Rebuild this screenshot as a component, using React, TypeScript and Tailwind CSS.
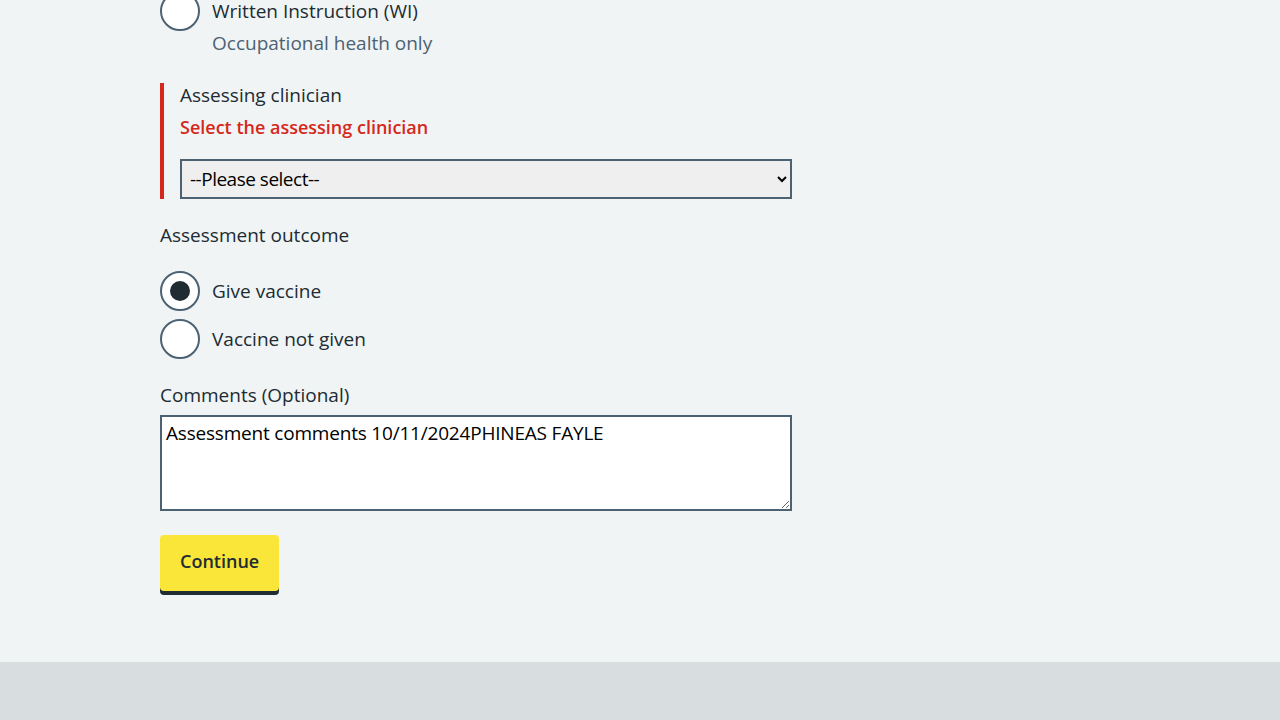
import { useState } from 'react'

const font = { fontFamily: '"Open Sans", "Noto Sans", sans-serif' }

function Radio({ label, checked, onChange }: { label: string; checked: boolean; onChange: () => void }) {
  return (
    <label className="flex items-center cursor-pointer" onClick={onChange}>
      <span className="flex h-10 w-10 shrink-0 items-center justify-center rounded-full border-2 border-[#4c6272] bg-white">
        {checked && <span className="h-5 w-5 rounded-full bg-[#212b32]" />}
      </span>
      <span className="ml-3 text-[19px] leading-7 text-[#212b32]">{label}</span>
    </label>
  )
}

export default function App() {
  const [outcome, setOutcome] = useState('give')
  const [type, setType] = useState('')

  return (
    <div className="min-h-screen bg-[#f0f4f5] flex flex-col" style={font}>
      <main className="px-[160px] pb-[71px]">
        <div className="w-[632px]">
          <div className="-mt-[9px]">
            <Radio label="Written Instruction (WI)" checked={type === 'wi'} onChange={() => setType('wi')} />
            <p className="ml-[52px] mt-[-2px] text-[19px] leading-7 text-[#4c6272]">Occupational health only</p>
          </div>

          <div className="mt-[26px] flex flex-col border-l-4 border-[#d5281b] pl-4">
            <p className="text-[19px] leading-7 text-[#212b32] -mt-[2px]">Assessing clinician</p>
            <p className="mt-1 text-[18px] leading-7 font-semibold text-[#d5281b]">Select the assessing clinician</p>
            <select className="mt-[18px] block h-10 w-[612px] border-2 border-[#4c6272] bg-[#efefef] px-1 text-[19px] text-black tracking-[-0.5px]">
              <option>--Please select--</option>
            </select>
          </div>

          <p className="mt-[22px] text-[19px] leading-7 text-[#212b32]">Assessment outcome</p>
          <div className="mt-[22px] flex flex-col gap-2">
            <Radio label="Give vaccine" checked={outcome === 'give'} onChange={() => setOutcome('give')} />
            <Radio label="Vaccine not given" checked={outcome === 'not'} onChange={() => setOutcome('not')} />
          </div>

          <p className="mt-[22px] text-[19px] leading-7 text-[#212b32]">Comments (Optional)</p>
          <textarea
            className="mt-[6px] block h-24 w-full border-2 border-[#4c6272] bg-white px-1 py-[2px] text-[19px] leading-7 text-black tracking-[-0.2px]"
            defaultValue="Assessment comments 10/11/2024PHINEAS FAYLE"
          />

          <button className="mt-6 h-14 rounded bg-[#fae639] px-5 pb-1 text-[18px] font-semibold text-[#212b32] shadow-[0_4px_0_#212b32]">
            Continue
          </button>
        </div>
      </main>
      <footer className="flex-1 bg-[#d8dde0]" />
    </div>
  )
}
